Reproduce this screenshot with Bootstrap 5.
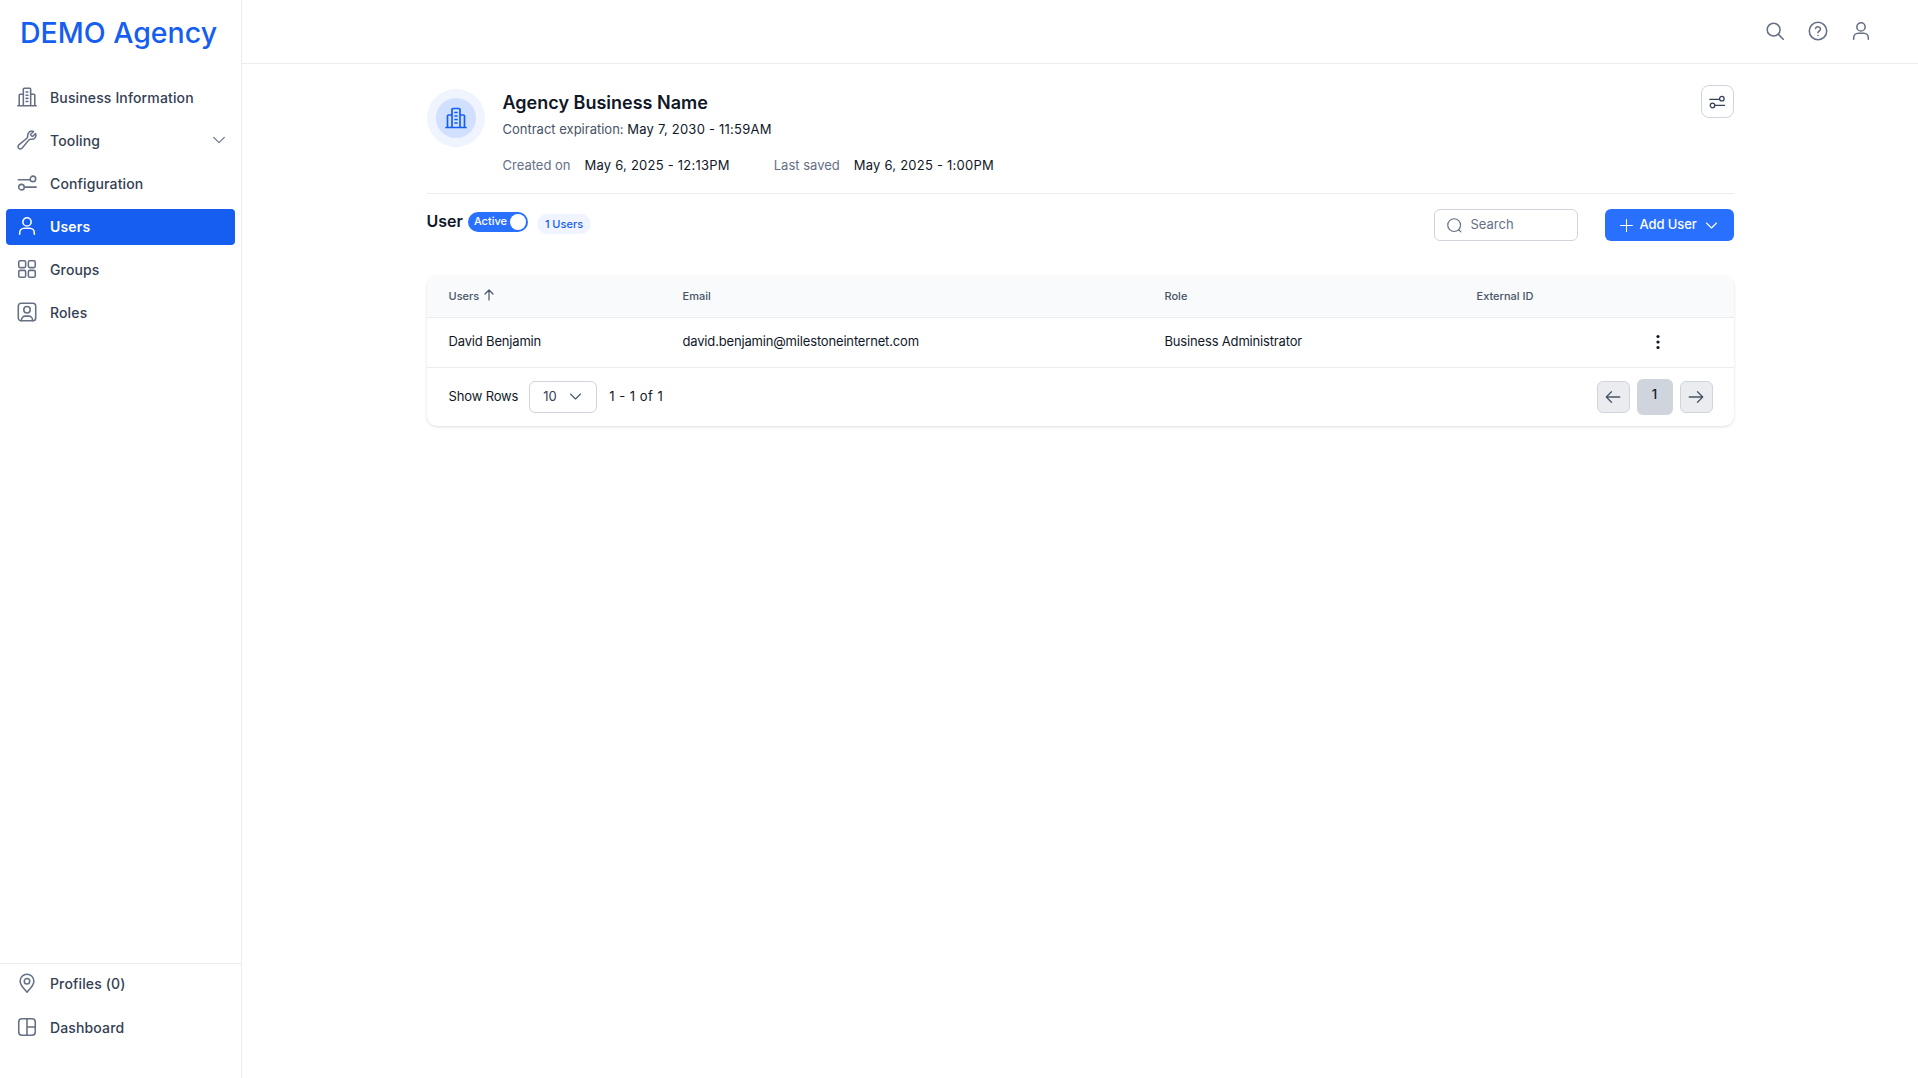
<!DOCTYPE html>
<html lang="en"><head><meta charset="utf-8"><title>Users</title>
<link href="https://cdn.jsdelivr.net/npm/bootstrap@5.3.0/dist/css/bootstrap.min.css" rel="stylesheet">
<style>
html,body{height:100%;overflow:hidden}
body{font-family:Inter,"Liberation Sans",sans-serif;font-size:13px;color:#101828;background:#fff}
svg{fill:none;stroke:currentColor;stroke-width:1.7;stroke-linecap:round;stroke-linejoin:round;flex:none;display:block}
.shell{height:1078px}
.side{width:242px;border-right:1px solid #eaecf0;flex:none}
.brand{height:63px;padding:1px 0 0 20px;font-size:28.500px;line-height:63px;font-weight:500;color:#155eef;white-space:nowrap}
.menu{padding:17px 6px 0;gap:7px}
.mlink{height:36px;padding:0 8px 2px 11px;gap:12px;border-radius:4px;color:#344054;font-size:14px;font-weight:500;letter-spacing:.14px;text-decoration:none}
.mlink svg{color:#667085;width:22px;height:22px;margin-left:-1px}
.mlink.on{background:#155eef;color:#fff;font-weight:600}
.mlink.on svg{color:#fff}
.mlink svg.chev{width:16px;height:16px;margin-left:auto}
.sidefoot{border-top:1px solid #eaecf0;height:115px;padding:2px 6px 0;gap:8px}
.top{height:64px;border-bottom:1px solid #eaecf0;padding:0 46px 2px 0;gap:21px;color:#667085}
.top svg{width:22px;height:22px}
.page{width:1307px;margin:0 auto;padding-top:25px}
.ava{width:58px;height:58px;background:#eff4ff;flex:none}
.ava>span{width:40px;height:40px;background:#d1e0ff;color:#155eef}
.ava svg{width:24px;height:24px}
.head{height:105px;border-bottom:1px solid #eaecf0}
.hinfo{margin-left:18px}
.bname{font-size:18px;line-height:28px;font-weight:600}
.mute{color:#475467}
.sub{line-height:20px;margin-top:2px}
.stamp{letter-spacing:.23px}
.meta{margin-top:16px;line-height:20px}
.metal{color:#667085;margin-right:14px}
.metal2{margin-left:44px}
.gear{width:33px;height:33px;padding:0;margin-top:-4px;border:1px solid #d0d5dd;border-radius:8px;color:#344054;background:#fff}
.gear svg{width:18px;height:18px}
.tbar{height:63px;padding-top:15px}
.utitle{font-size:16px;font-weight:600;line-height:24px}
.tog{width:60px;height:20px;background:#2970ff;color:#fff;font-size:11px;font-weight:500;padding:0 2px 2px 6px;margin:3px 9px 0 5px}
.knob{width:16px;height:16px;background:#fff;margin-top:2px;margin-left:auto}
.ubadge{height:20px;padding:0 8px;background:#eff4ff;color:#155eef;font-size:11px;font-weight:500;border-radius:10px;margin-top:5px}
.sbox{width:144px;height:32px;border:1px solid #d0d5dd;border-radius:6px;padding:0 11px;gap:8px;color:#667085;margin-right:27px}
.sbox svg{width:17px;height:17px}
.sbox input{border:0;outline:0;padding:0;width:80px;font-size:13px;color:#667085;background:transparent}
.sbox input::placeholder{color:#667085;opacity:1}
.addb{width:129px;height:32px;padding:0 15px 0 14px;gap:6px;background:#2970ff;border:0;border-radius:6px;color:#fff;font-size:13px;font-weight:500;letter-spacing:-.1px;white-space:nowrap}
.addb:hover{background:#2970ff;color:#fff}
.addb svg{width:15px;height:15px}
.tcard{margin-top:19px;height:150px;border-radius:10px;box-shadow:0 1px 3px rgba(16,24,40,.14);overflow:hidden}
.grid-t{margin:0;table-layout:fixed;width:100%}
.grid-t th{height:41px;background:#f9fafb;font-size:11px;font-weight:500;color:#475467;border-bottom:1px solid #eaecf0;padding:0;vertical-align:middle}
.grid-t td{height:50px;font-size:13px;letter-spacing:-.17px;color:#101828;border-bottom:1px solid #eaecf0;padding:0;vertical-align:middle}
.c1{width:256px;padding-left:22px!important}.c2{width:482px}.c3{width:312px}.c4{width:150px}
.sorta{margin-top:-2px;stroke-width:1.2}
.tfoot-x{height:58px;padding:0 21px 0 22px}
.srows{letter-spacing:-.15px}
.rcount{letter-spacing:.5px}
.rsel{width:68px;height:32px;border:1px solid #d0d5dd;border-radius:6px;padding:0 13px;background:#fff;margin:0 12px 0 11px;color:#344054;font-size:13px}
.rsel svg{width:15px;height:15px;color:#475467}
.pbtn{width:33px;height:32px;padding:0;border:1px solid #d0d5dd;background:#eaecf0;border-radius:6px;color:#475467}
.pbtn svg{width:18px;height:18px}
.pcur{width:36px;height:36px;background:#d0d5dd;border:0;border-radius:6px;font-size:13px;font-weight:500;color:#101828;margin:0 7px;padding:0 0 3px}
.dots{width:20px;margin-left:21px;color:#101828;stroke:none;fill:#101828}
</style></head>
<body>
<div class="d-flex shell">
<aside class="side d-flex flex-column">
  <div class="brand">DEMO Agency</div>
  <nav class="menu d-flex flex-column flex-grow-1">
    <a class="mlink d-flex align-items-center" href="#"><svg viewBox="0 0 24 24"><path d="M2 21.500h20M8 21.500V3.500a1 1 0 0 1 1-1h6a1 1 0 0 1 1 1v18M8 9H4.500a1 1 0 0 0-1 1v11.500M16 9h3.500a1 1 0 0 1 1 1v11.500M11 6.500h2M11 10h2M11 13.500h2M11 17h2"/></svg>Business Information</a>
    <a class="mlink d-flex align-items-center" href="#"><svg viewBox="0 0 24 24"><path d="M21.750 6.750a4.500 4.500 0 0 1-4.884 4.484c-1.076-.091-2.264.071-2.950.904l-7.152 8.684a2.548 2.548 0 1 1-3.586-3.586l8.684-7.152c.833-.686.995-1.874.904-2.950a4.500 4.500 0 0 1 6.336-4.486l-3.276 3.276a3.004 3.004 0 0 0 2.250 2.250l3.276-3.276c.304.640.398 1.300.398 1.852z"/></svg>Tooling<svg class="chev" viewBox="0 0 24 24"><path d="m4 8 8 8 8-8"/></svg></a>
    <a class="mlink d-flex align-items-center" href="#"><svg viewBox="0 0 24 24"><path d="M2.500 8.500H15M9.500 16.500H22"/><circle cx="18.500" cy="7.500" r="3"/><circle cx="6" cy="16.500" r="3"/></svg>Configuration</a>
    <a class="mlink on d-flex align-items-center" href="#"><svg viewBox="0 0 24 24"><circle cx="12" cy="7.500" r="4.500"/><path d="M4 21v-1.500a5 5 0 0 1 5-5h6a5 5 0 0 1 5 5V21"/></svg>Users</a>
    <a class="mlink d-flex align-items-center" href="#"><svg viewBox="0 0 24 24"><rect x="3" y="3" width="7.500" height="7.500" rx="1.500"/><rect x="13.500" y="3" width="7.500" height="7.500" rx="1.500"/><rect x="3" y="13.500" width="7.500" height="7.500" rx="1.500"/><rect x="13.500" y="13.500" width="7.500" height="7.500" rx="1.500"/></svg>Groups</a>
    <a class="mlink d-flex align-items-center" href="#"><svg viewBox="0 0 24 24"><rect x="2.500" y="2.500" width="19" height="19" rx="3"/><circle cx="12" cy="9.500" r="3.500"/><path d="M6 21.500v-1a4 4 0 0 1 4-4h4a4 4 0 0 1 4 4v1"/></svg>Roles</a>
  </nav>
  <div class="sidefoot d-flex flex-column">
    <a class="mlink d-flex align-items-center" href="#"><svg viewBox="0 0 24 24"><path d="M12 22c-1.500-2-7.500-7-7.500-12a7.500 7.500 0 0 1 15 0c0 5-6 10-7.500 12z"/><circle cx="12" cy="10" r="3"/></svg>Profiles (0)</a>
    <a class="mlink d-flex align-items-center" href="#"><svg viewBox="0 0 24 24"><rect x="3" y="3" width="18" height="18" rx="3.500"/><path d="M12 3v18M12 12h9"/></svg>Dashboard</a>
  </div>
</aside>
<main class="flex-grow-1">
  <header class="top d-flex align-items-center justify-content-end">
    <svg viewBox="0 0 24 24"><circle cx="10.500" cy="10.500" r="7"/><path d="m16 16 5 5"/></svg>
    <svg viewBox="0 0 24 24"><circle cx="12" cy="12" r="9.500"/><path d="M9.300 9.200a2.800 2.800 0 0 1 5.400.8c0 1.800-2.700 2.300-2.700 3.800M12 17h.01"/></svg>
    <svg viewBox="0 0 24 24"><circle cx="12" cy="7.500" r="4.500"/><path d="M4 21v-1.500a5 5 0 0 1 5-5h6a5 5 0 0 1 5 5V21"/></svg>
  </header>
  <div class="page">
    <section class="head d-flex">
      <div class="ava rounded-circle d-flex align-items-center justify-content-center"><span class="rounded-circle d-flex align-items-center justify-content-center"><svg viewBox="0 0 24 24"><path d="M2 21.500h20M8 21.500V3.500a1 1 0 0 1 1-1h6a1 1 0 0 1 1 1v18M8 9H4.500a1 1 0 0 0-1 1v11.500M16 9h3.500a1 1 0 0 1 1 1v11.500M11 6.500h2M11 10h2M11 13.500h2M11 17h2"/></svg></span></div>
      <div class="hinfo flex-grow-1">
        <div class="bname">Agency Business Name</div>
        <div class="sub"><span class="mute">Contract expiration:</span> <span class="stamp">May 7, 2030 - 11:59AM</span></div>
        <div class="meta d-flex"><span class="metal">Created on</span><span class="stamp">May 6, 2025 - 12:13PM</span><span class="metal metal2">Last saved</span><span class="stamp">May 6, 2025 - 1:00PM</span></div>
      </div>
      <button class="btn gear d-flex align-items-center justify-content-center" type="button" aria-label="Settings"><svg viewBox="0 0 24 24"><path d="M2.500 8.500H15M9.500 16.500H22"/><circle cx="18.500" cy="7.500" r="3"/><circle cx="6" cy="16.500" r="3"/></svg></button>
    </section>
    <section class="tbar d-flex align-items-start">
      <div class="utitle">User</div>
      <div class="tog rounded-pill d-flex align-items-center"><span>Active</span><span class="knob rounded-circle"></span></div>
      <span class="ubadge d-inline-flex align-items-center">1 Users</span>
      <div class="sbox d-flex align-items-center ms-auto"><svg viewBox="0 0 24 24"><circle cx="11.500" cy="11.500" r="9"/><path d="m18 18 3 3"/></svg><input type="text" placeholder="Search" aria-label="Search"></div>
      <button class="addb btn d-flex align-items-center" type="button"><svg viewBox="0 0 24 24"><path d="M12 2.500v19M2.500 12h19"/></svg><span>Add User</span><svg class="ms-auto" viewBox="0 0 24 24"><path d="m4 8 8 8 8-8"/></svg></button>
    </section>
    <section class="tcard">
      <table class="table grid-t">
        <thead><tr><th class="c1"><span class="d-inline-flex align-items-center gap-1">Users <svg class="sorta" width="12" height="14" viewBox="0 0 12 14"><path d="M6 12V2M2 6l4-4 4 4"/></svg></span></th><th class="c2">Email</th><th class="c3">Role</th><th class="c4">External ID</th><th></th></tr></thead>
        <tbody><tr><td class="c1">David Benjamin</td><td>david.benjamin@milestoneinternet.com</td><td>Business Administrator</td><td></td><td><svg class="dots" height="16" viewBox="0 0 20 16"><circle cx="10" cy="2.500" r="1.600"/><circle cx="10" cy="8" r="1.600"/><circle cx="10" cy="13.500" r="1.600"/></svg></td></tr></tbody>
      </table>
      <div class="tfoot-x d-flex align-items-center">
        <span class="srows">Show Rows</span>
        <button class="rsel btn d-flex align-items-center justify-content-between" type="button">10<svg viewBox="0 0 24 24"><path d="m4 8 8 8 8-8"/></svg></button>
        <span class="rcount">1 - 1 of 1</span>
        <div class="ms-auto d-flex align-items-center">
          <button class="pbtn btn d-flex align-items-center justify-content-center" type="button" aria-label="Previous"><svg viewBox="0 0 24 24"><path d="M21 12H3M10 5l-7 7 7 7"/></svg></button>
          <button class="pcur btn" type="button">1</button>
          <button class="pbtn btn d-flex align-items-center justify-content-center" type="button" aria-label="Next"><svg viewBox="0 0 24 24"><path d="M3 12h18M14 5l7 7-7 7"/></svg></button>
        </div>
      </div>
    </section>
  </div>
</main>
</div>
<script src="https://cdn.jsdelivr.net/npm/bootstrap@5.3.0/dist/js/bootstrap.bundle.min.js"></script>
</body></html>
